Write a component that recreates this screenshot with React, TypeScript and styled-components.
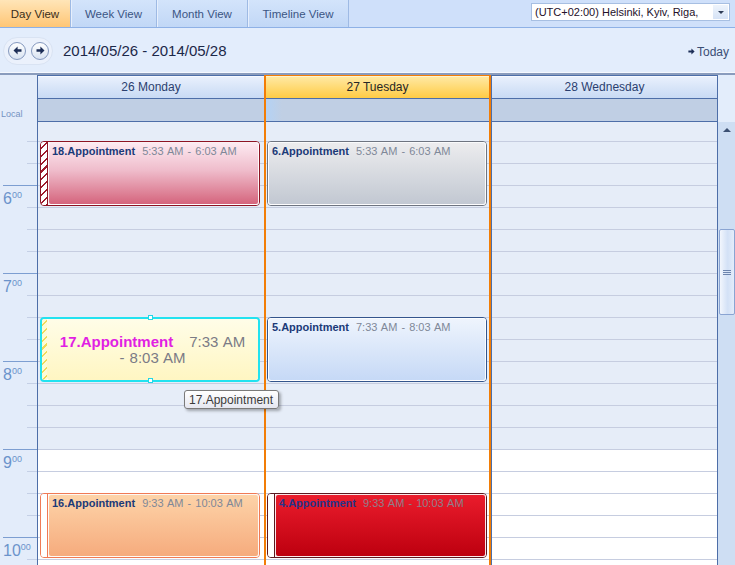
import React from 'react';
import styled, { createGlobalStyle, css } from 'styled-components';

const GlobalStyle = createGlobalStyle`
  html, body {
    margin: 0;
    padding: 0;
  }
  body {
    font-family: 'Liberation Sans', Arial, sans-serif;
    background: #e3edfb;
  }
`;

type ApptData = {
  id: string;
  start: number; // slot index counted from 5:30
  span: number;
  time: string;
  border: string;
  body: string;
  stripe?: string;
  stripeLine?: string;
  titleColor?: string;
  timeColor?: string;
  selected?: boolean;
};

type DayData = {
  label: string;
  inset: number;
  today?: boolean;
  last?: boolean;
  appts: ApptData[];
};

const FIRST_SLOT = 315; // 5:15, partly hidden under the header

const slots = Array.from({ length: 22 }, (_, i) => {
  const minutes = FIRST_SLOT + i * 15;
  return {
    minutes,
    height: i === 0 ? 20 : 22,
    work: minutes >= 540,
    hourEnd: (minutes + 15) % 60 === 0,
    hour: minutes % 60 === 0 ? minutes / 60 : null,
  };
});

const slotTop = (index: number) => 19 + index * 22;

const redHatch = 'repeating-linear-gradient(135deg, #ffffff 0 4px, #9e1a2c 4px 5.5px)';
const yellowHatch = 'repeating-linear-gradient(135deg, #fffbd6 0 4px, #f0da5a 4px 5.5px)';

const days: DayData[] = [
  {
    label: '26 Monday',
    inset: 2,
    appts: [
      {
        id: '18.Appointment',
        start: 0,
        span: 3,
        time: '5:33 AM - 6:03 AM',
        border: '#8e1424',
        body: 'linear-gradient(#fdeaf1, #efbccb 45%, #d5657d)',
        stripe: redHatch,
        stripeLine: '#8e1424',
      },
      {
        id: '17.Appointment',
        start: 8,
        span: 3,
        time: '7:33 AM',
        border: '#22e2f0',
        body: 'linear-gradient(#fffde8, #fff6c2)',
        stripe: yellowHatch,
        selected: true,
      },
      {
        id: '16.Appointment',
        start: 16,
        span: 3,
        time: '9:33 AM - 10:03 AM',
        border: '#f07a55',
        body: 'linear-gradient(#fdd3a8, #f6ab7d)',
        stripe: '#ffffff',
        stripeLine: '#f07a55',
      },
    ],
  },
  {
    label: '27 Tuesday',
    inset: 1,
    today: true,
    appts: [
      {
        id: '6.Appointment',
        start: 0,
        span: 3,
        time: '5:33 AM - 6:03 AM',
        border: '#6e7480',
        body: 'linear-gradient(#ececee, #c2c8d2)',
      },
      {
        id: '5.Appointment',
        start: 8,
        span: 3,
        time: '7:33 AM - 8:03 AM',
        border: '#34558c',
        body: 'linear-gradient(#eef4fd, #c6d9f6)',
      },
      {
        id: '4.Appointment',
        start: 16,
        span: 3,
        time: '9:33 AM - 10:03 AM',
        border: '#5c1820',
        body: 'linear-gradient(#ea1c2c, #bd000f)',
        stripe: '#ffffff',
        stripeLine: '#5c1820',
        titleColor: '#27348a',
        timeColor: '#8e808c',
      },
    ],
  },
  { label: '28 Wednesday', inset: 1, last: true, appts: [] },
];

const Page = styled.div`
  position: relative;
  width: 735px;
  height: 565px;
  overflow: hidden;
  display: flex;
  flex-direction: column;
  background: #e3edfb;
`;

/* top view switcher */
const TabBar = styled.div`
  flex: none;
  height: 27px;
  display: flex;
  background: #cfe0fa;
  border-bottom: 1px solid #8eb1e6;
`;

const Tab = styled.div<{ $active?: boolean; $w: number }>`
  width: ${p => p.$w}px;
  box-sizing: border-box;
  display: flex;
  align-items: center;
  justify-content: center;
  font-size: 11.5px;
  color: #3b5584;
  background: linear-gradient(#d3e4fb, #c1d7f6);
  border-right: 1px solid #9ebae4;
  box-shadow: inset 1px 0 0 #e6effd;
  ${p =>
    p.$active &&
    css`
      color: #3a2e1a;
      background: linear-gradient(#ffe5b8, #ffc675);
      box-shadow: none;
    `}
`;

const ZoneSelect = styled.div`
  margin: 3px 5px 0 auto;
  width: 199px;
  height: 18px;
  box-sizing: border-box;
  border: 1px solid #a7bfe2;
  background: #fff;
  display: flex;
  align-items: center;
`;

const ZoneText = styled.span`
  flex: 1;
  padding-left: 3px;
  font-size: 11px;
  color: #24102a;
  white-space: nowrap;
  overflow: hidden;
`;

const ZoneButton = styled.div`
  width: 15px;
  height: 14px;
  margin-right: 1px;
  display: flex;
  align-items: center;
  justify-content: center;
  background: linear-gradient(#eef4fc, #d6e3f6);
`;

const DownTriangle = styled.div`
  width: 0;
  height: 0;
  border-left: 3px solid transparent;
  border-right: 3px solid transparent;
  border-top: 3px solid #2d3b55;
`;

/* navigation row */
const NavBar = styled.div`
  flex: none;
  height: 45px;
  display: flex;
  align-items: center;
  background: #e3edfc;
  border-bottom: 2px solid #8a9cbd;
  box-shadow: inset 0 -1px 0 #f5f8fe;
`;

const NavGroup = styled.div`
  margin-left: 3px;
  width: 50px;
  height: 28px;
  box-sizing: border-box;
  display: flex;
  align-items: center;
  gap: 5px;
  padding-left: 4px;
  border-radius: 14px;
  background: #ebf1fc;
  border: 1px solid #d9e3f3;
`;

const RoundButton = styled.div`
  width: 18px;
  height: 18px;
  box-sizing: border-box;
  border-radius: 50%;
  border: 1px solid #8599bf;
  background: linear-gradient(#ffffff, #d9e3f2);
  display: flex;
  align-items: center;
  justify-content: center;
`;

const DateRange = styled.div`
  margin-left: 10px;
  font-size: 15px;
  color: #1c2849;
`;

const TodayLink = styled.div`
  margin-left: auto;
  margin-right: 6px;
  margin-top: 2px;
  display: flex;
  align-items: center;
  gap: 2px;
  font-size: 12px;
  color: #3a4e74;
`;

/* scheduler grid */
const Calendar = styled.div`
  flex: 1;
  min-height: 0;
  display: grid;
  grid-template-columns: 37px 227px 227px 227px 17px;
  overflow: hidden;
`;

const TimeColumn = styled.div`
  display: flex;
  flex-direction: column;
  background: #e3ecfa;
`;

const TimeHead = styled.div`
  flex: none;
  height: 47px;
  box-sizing: border-box;
  display: flex;
  align-items: flex-end;
  padding: 0 0 3px 1px;
`;

const LocalLabel = styled.span`
  font-size: 9px;
  color: #7593c2;
`;

const TimeSlot = styled.div<{ $h: number; $hourEnd: boolean }>`
  flex: none;
  height: ${p => p.$h}px;
  box-sizing: border-box;
  display: flex;
  align-items: flex-start;
  padding: 5px 0 0 3px;
  color: #6b93cb;
  background: ${p =>
    p.$hourEnd
      ? 'linear-gradient(#7d9ed1, #7d9ed1) no-repeat right bottom / 34px 1px'
      : 'linear-gradient(#c5d0e6, #c5d0e6) no-repeat right bottom / 10px 1px'};
`;

const HourNumber = styled.span`
  font-size: 16px;
  line-height: 16px;
`;

const HourMinutes = styled.span`
  font-size: 9px;
  line-height: 9px;
`;

const DayColumn = styled.div<{ $today?: boolean; $last?: boolean }>`
  display: flex;
  flex-direction: column;
  min-width: 0;
  box-sizing: border-box;
  border-left: 1px solid #4d6ea8;
  ${p => p.$last && css`border-right: 1px solid #4d6ea8;`}
  ${p =>
    p.$today &&
    css`
      border-left: 2px solid #f27d06;
      border-right: 2px solid #f27d06;
    `}
`;

const DayHeader = styled.div<{ $today?: boolean }>`
  flex: none;
  height: 24px;
  box-sizing: border-box;
  display: flex;
  align-items: center;
  justify-content: center;
  font-size: 12px;
  color: #2b3f6f;
  border-top: 1px solid #4d6ea8;
  border-bottom: 1px solid #4d6ea8;
  background: linear-gradient(#eaf1fd, #c8daf4);
  box-shadow: inset 0 1px 0 #f6f9ff;
  ${p =>
    p.$today &&
    css`
      color: #262626;
      border-top-color: #f27d06;
      background: linear-gradient(#ffeaa6, #ffcb45);
      box-shadow: inset 0 1px 0 #fff3cc;
    `}
`;

const AllDay = styled.div<{ $today?: boolean }>`
  flex: none;
  height: 23px;
  box-sizing: border-box;
  border-bottom: 1px solid #4d6ea8;
  background: ${p =>
    p.$today ? 'linear-gradient(90deg, #b4d2f5, #c0cfe4 16px)' : '#c0cfe4'};
`;

const SlotArea = styled.div`
  position: relative;
  flex: 1;
  min-height: 0;
`;

const Slot = styled.div<{ $h: number; $work: boolean }>`
  height: ${p => p.$h}px;
  box-sizing: border-box;
  border-bottom: 1px solid #c6cde0;
  background: ${p => (p.$work ? '#ffffff' : '#e6edf8')};
`;

const ApptBox = styled.div<{
  $top: number;
  $height: number;
  $left: number;
  $border: string;
  $selected?: boolean;
}>`
  position: absolute;
  top: ${p => p.$top}px;
  left: ${p => p.$left}px;
  width: 220px;
  height: ${p => p.$height}px;
  box-sizing: border-box;
  display: flex;
  border: ${p => (p.$selected ? 2 : 1)}px solid ${p => p.$border};
  border-radius: 4px;
  background: #fff;
`;

const Stripe = styled.div<{ $bg: string; $line?: string; $w: number }>`
  flex: none;
  width: ${p => p.$w}px;
  background: ${p => p.$bg};
  border-radius: 3px 0 0 3px;
  ${p => p.$line && css`border-right: 1px solid ${p.$line};`}
`;

const ApptBody = styled.div<{ $bg: string; $centered?: boolean }>`
  flex: 1;
  min-width: 0;
  box-sizing: border-box;
  overflow: hidden;
  white-space: nowrap;
  background: ${p => p.$bg};
  border: 1px solid rgba(255, 255, 255, 0.9);
  border-radius: 3px;
  padding: 2px 3px;
  font-size: 11px;
  line-height: 13px;
  ${p =>
    p.$centered &&
    css`
      display: flex;
      flex-direction: column;
      align-items: center;
      justify-content: center;
      border: none;
      padding: 0;
      font-size: 15px;
      line-height: 16px;
    `}
`;

const ApptTitle = styled.span<{ $color: string }>`
  font-weight: bold;
  color: ${p => p.$color};
`;

const ApptTime = styled.span<{ $color: string; $gap?: number }>`
  margin-left: ${p => p.$gap ?? 0}px;
  color: ${p => p.$color};
  word-spacing: 1px;
`;

const Handle = styled.div<{ $edge: 'top' | 'bottom' }>`
  position: absolute;
  left: calc(50% - 2.5px);
  ${p => (p.$edge === 'top' ? 'top: -4px;' : 'bottom: -3px;')}
  width: 5px;
  height: 5px;
  box-sizing: border-box;
  background: #fff;
  border: 1px solid #22d8e6;
`;

const Tooltip = styled.div`
  position: absolute;
  left: 184px;
  top: 390px;
  height: 19px;
  box-sizing: border-box;
  padding: 0 5px 0 4px;
  display: flex;
  align-items: center;
  font-size: 12px;
  color: #3a3a3a;
  background: linear-gradient(#ffffff, #e6e7f0);
  border: 1px solid #7a7a7a;
  border-radius: 3px;
  box-shadow: 2px 2px 3px rgba(0, 0, 0, 0.3);
`;

/* vertical scrollbar */
const ScrollColumn = styled.div`
  display: flex;
  flex-direction: column;
`;

const ScrollHead = styled.div`
  flex: none;
  height: 47px;
  background: #e3edfb;
`;

const Track = styled.div`
  flex: 1;
  display: flex;
  flex-direction: column;
  align-items: center;
  background: #cedef3;
`;

const ScrollArrow = styled.div<{ $dir: 'up' | 'down' }>`
  flex: none;
  height: 16px;
  display: flex;
  align-items: center;
  justify-content: center;
  ${p => p.$dir === 'down' && css`margin: auto 0 4px;`}
  &::before {
    content: '';
    width: 0;
    height: 0;
    border-left: 4px solid transparent;
    border-right: 4px solid transparent;
    ${p =>
      p.$dir === 'up'
        ? css`border-bottom: 4px solid #3c5073;`
        : css`border-top: 4px solid #3c5073;`}
  }
`;

const Thumb = styled.div`
  margin: 91px 0 0 1px;
  width: 16px;
  height: 86px;
  box-sizing: border-box;
  border: 1px solid #8aa4d2;
  border-radius: 2px;
  background: linear-gradient(90deg, #f2f6fd, #d3e1f6 55%, #e4edfa);
  display: flex;
  align-items: center;
  justify-content: center;
`;

const Grip = styled.div`
  width: 8px;
  height: 5px;
  background: repeating-linear-gradient(#6d84ad 0 1px, transparent 1px 2px);
`;

const Arrow = ({ dir, size = 9 }: { dir: 'left' | 'right'; size?: number }) => (
  <svg width={size} height={size} viewBox="0 0 9 9">
    <path
      d="M0.5 4.5 L4.6 0.6 V3.2 H8.5 V5.8 H4.6 V8.4 Z"
      fill="#1d2e57"
      transform={dir === 'right' ? 'rotate(180 4.5 4.5)' : undefined}
    />
  </svg>
);

const Appointment = ({ a, left }: { a: ApptData; left: number }) => {
  const titleColor = a.selected ? '#e11fe3' : a.titleColor ?? '#1b3a78';
  const timeColor = a.selected ? '#7b7b86' : a.timeColor ?? '#7f8898';
  return (
    <ApptBox
      $top={slotTop(a.start)}
      $height={a.span * 22 - 1}
      $left={left}
      $border={a.border}
      $selected={a.selected}
    >
      {a.stripe && <Stripe $bg={a.stripe} $line={a.stripeLine} $w={a.selected ? 5 : 6} />}
      <ApptBody $bg={a.body} $centered={a.selected}>
        {a.selected ? (
          <>
            <div>
              <ApptTitle $color={titleColor}>{a.id}</ApptTitle>
              <ApptTime $color={timeColor} $gap={16}>
                {a.time}
              </ApptTime>
            </div>
            <div>
              <ApptTime $color={timeColor}>- 8:03 AM</ApptTime>
            </div>
          </>
        ) : (
          <>
            <ApptTitle $color={titleColor}>{a.id}</ApptTitle>
            <ApptTime $color={timeColor} $gap={7}>
              {a.time}
            </ApptTime>
          </>
        )}
      </ApptBody>
      {a.selected && (
        <>
          <Handle $edge="top" />
          <Handle $edge="bottom" />
        </>
      )}
    </ApptBox>
  );
};

const tabs = [
  { label: 'Day View', w: 71, active: true },
  { label: 'Week View', w: 86 },
  { label: 'Month View', w: 91 },
  { label: 'Timeline View', w: 101 },
];

const App = () => (
  <Page>
    <GlobalStyle />
    <TabBar>
      {tabs.map(t => (
        <Tab key={t.label} $w={t.w} $active={t.active}>
          {t.label}
        </Tab>
      ))}
      <ZoneSelect>
        <ZoneText>(UTC+02:00) Helsinki, Kyiv, Riga,</ZoneText>
        <ZoneButton>
          <DownTriangle />
        </ZoneButton>
      </ZoneSelect>
    </TabBar>

    <NavBar>
      <NavGroup>
        <RoundButton>
          <Arrow dir="left" />
        </RoundButton>
        <RoundButton>
          <Arrow dir="right" />
        </RoundButton>
      </NavGroup>
      <DateRange>2014/05/26 - 2014/05/28</DateRange>
      <TodayLink>
        <Arrow dir="right" size={7} />
        Today
      </TodayLink>
    </NavBar>

    <Calendar>
      <TimeColumn>
        <TimeHead>
          <LocalLabel>Local</LocalLabel>
        </TimeHead>
        {slots.map(s => (
          <TimeSlot key={s.minutes} $h={s.height} $hourEnd={s.hourEnd}>
            {s.hour !== null && (
              <>
                <HourNumber>{s.hour}</HourNumber>
                <HourMinutes>00</HourMinutes>
              </>
            )}
          </TimeSlot>
        ))}
      </TimeColumn>

      {days.map(d => (
        <DayColumn key={d.label} $today={d.today} $last={d.last}>
          <DayHeader $today={d.today}>{d.label}</DayHeader>
          <AllDay $today={d.today} />
          <SlotArea>
            {slots.map(s => (
              <Slot key={s.minutes} $h={s.height} $work={s.work} />
            ))}
            {d.appts.map(a => (
              <Appointment key={a.id} a={a} left={d.inset} />
            ))}
          </SlotArea>
        </DayColumn>
      ))}

      <ScrollColumn>
        <ScrollHead />
        <Track>
          <ScrollArrow $dir="up" />
          <Thumb>
            <Grip />
          </Thumb>
          <ScrollArrow $dir="down" />
        </Track>
      </ScrollColumn>
    </Calendar>

    <Tooltip>17.Appointment</Tooltip>
  </Page>
);

export default App;
